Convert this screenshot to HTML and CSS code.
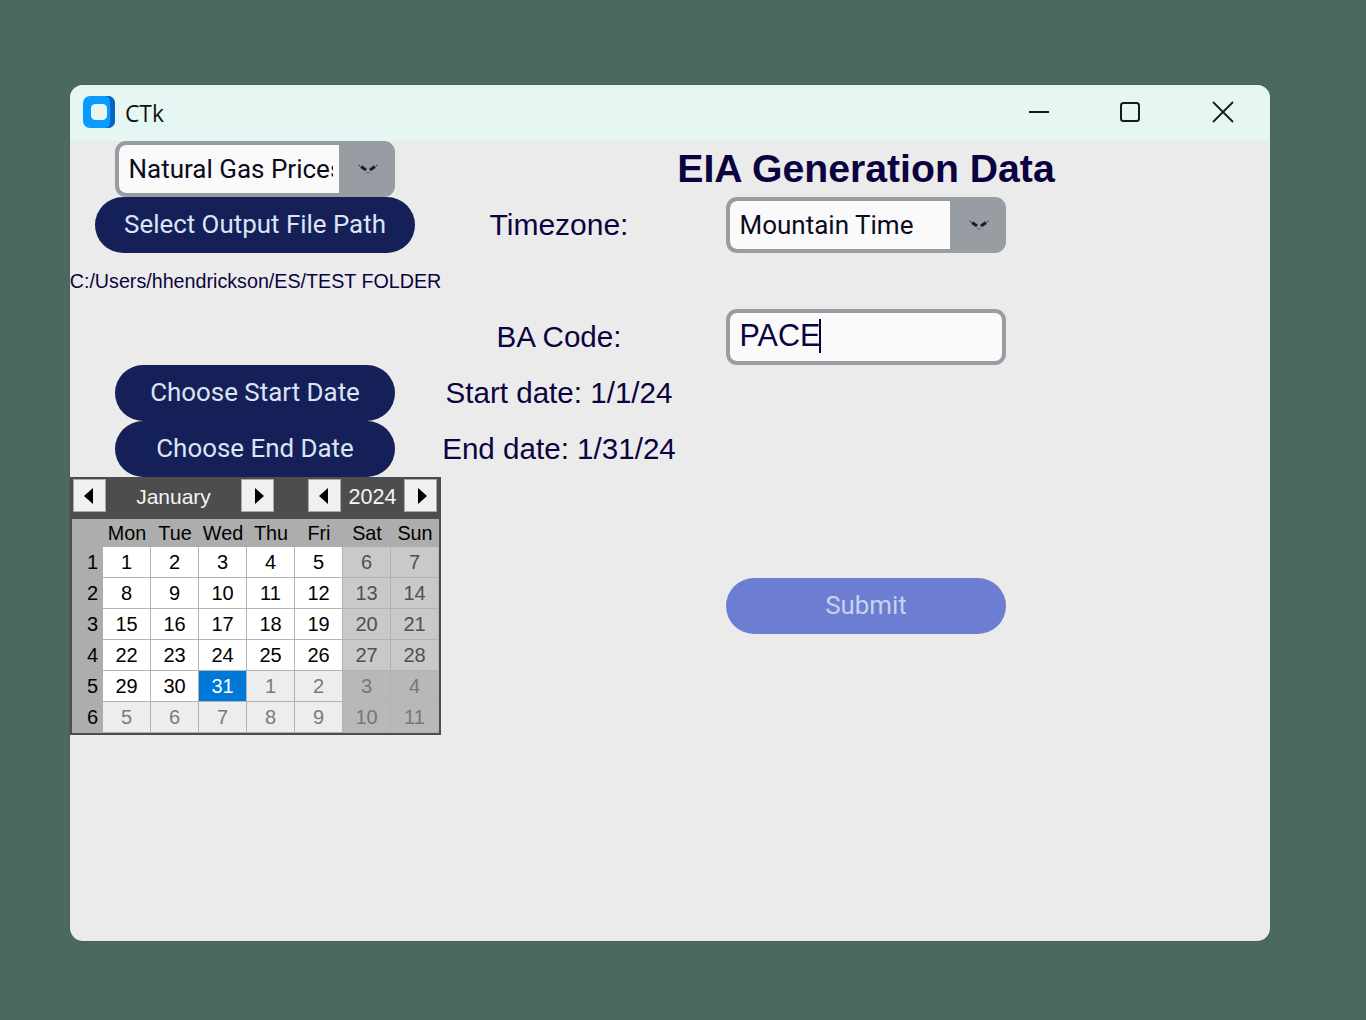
FILE: index.html
```html
<!DOCTYPE html>
<html lang="en">
<head>
<meta charset="utf-8">
<title>CTk</title>
<link rel="stylesheet" href="styles.css">
</head>
<body>
<div class="window">
  <header class="titlebar">
    <svg class="app-icon" width="32" height="32" viewBox="0 0 32 32"><rect width="32" height="32" rx="7" fill="#0a9bff"/><path d="M23 0h2a7 7 0 0 1 7 7v18a7 7 0 0 1-7 7h-2c3-1 4-3 4-6V6c0-3-1-5-4-6z" fill="#0667c0"/><rect x="8" y="8" width="16" height="16" rx="4.500" fill="#e6f7f3"/></svg>
    <span class="app-title">CTk</span>
    <div class="win-controls">
      <svg class="wc wc-min" width="22" height="22" viewBox="0 0 22 22"><path d="M1 11h20" stroke="#1a1a1a" stroke-width="2"/></svg>
      <svg class="wc wc-max" width="22" height="22" viewBox="0 0 22 22"><rect x="2" y="2" width="18" height="18" rx="2.500" fill="none" stroke="#1a1a1a" stroke-width="2"/></svg>
      <svg class="wc wc-close" width="22" height="22" viewBox="0 0 22 22"><path d="M1 1l20 20M21 1L1 21" stroke="#1a1a1a" stroke-width="1.800"/></svg>
    </div>
  </header>
  <main class="form">
    <div class="cell cell-left"><div class="combo"><span class="combo-text">Natural Gas Prices</span><span class="combo-arrow"><svg width="20" height="10" viewBox="0 0 20 10"><path d="M3 2.500L8 6M12 6l5-3.500" fill="none" stroke="#1c1c1c" stroke-width="3"/><path d="M.5 1L2 2M19.500 1L18 2" fill="none" stroke="#2a2a2a" stroke-width="1"/><path d="M8 8.500q2 1.500 4 0" fill="none" stroke="#666" stroke-width="1"/></svg></span></div></div>
    <div class="cell"></div>
    <div class="cell"><h1 class="heading">EIA Generation Data</h1></div>

    <div class="cell cell-left"><button class="pill pill-wide">Select Output File Path</button></div>
    <div class="cell"><span class="label label-tz">Timezone:</span></div>
    <div class="cell"><div class="combo"><span class="combo-text">Mountain Time</span><span class="combo-arrow"><svg width="20" height="10" viewBox="0 0 20 10"><path d="M3 2.500L8 6M12 6l5-3.500" fill="none" stroke="#1c1c1c" stroke-width="3"/><path d="M.5 1L2 2M19.500 1L18 2" fill="none" stroke="#2a2a2a" stroke-width="1"/><path d="M8 8.500q2 1.500 4 0" fill="none" stroke="#666" stroke-width="1"/></svg></span></div></div>

    <div class="cell"><span class="path">C:/Users/hhendrickson/ES/TEST FOLDER</span></div>
    <div class="cell"></div>
    <div class="cell"></div>

    <div class="cell"></div>
    <div class="cell"><span class="label label-ba">BA Code:</span></div>
    <div class="cell"><div class="entry"><span class="entry-text">PACE</span><span class="caret"></span></div></div>

    <div class="cell cell-left"><button class="pill">Choose Start Date</button></div>
    <div class="cell"><span class="label">Start date: 1/1/24</span></div>
    <div class="cell"></div>

    <div class="cell cell-left"><button class="pill">Choose End Date</button></div>
    <div class="cell"><span class="label">End date: 1/31/24</span></div>
    <div class="cell"></div>

    <div class="cell cell-cal">
      <div class="calendar">
        <div class="cal-head">
          <button class="nav nav-first"><svg width="12" height="16" viewBox="0 0 12 16"><path d="M9 0v16L0 8z"/></svg></button>
          <span class="month">January</span>
          <button class="nav"><svg width="12" height="16" viewBox="0 0 12 16"><path d="M3 0v16l9-8z"/></svg></button>
          <button class="nav nav-year"><svg width="12" height="16" viewBox="0 0 12 16"><path d="M9 0v16L0 8z"/></svg></button>
          <span class="year">2024</span>
          <button class="nav"><svg width="12" height="16" viewBox="0 0 12 16"><path d="M3 0v16l9-8z"/></svg></button>
        </div>
        <div class="cal-grid">
          <span class="dow"></span><span class="dow">Mon</span><span class="dow">Tue</span><span class="dow">Wed</span><span class="dow">Thu</span><span class="dow">Fri</span><span class="dow">Sat</span><span class="dow">Sun</span>
          <span class="wk">1</span><span class="d">1</span><span class="d">2</span><span class="d">3</span><span class="d">4</span><span class="d">5</span><span class="d we">6</span><span class="d we">7</span>
          <span class="wk">2</span><span class="d">8</span><span class="d">9</span><span class="d">10</span><span class="d">11</span><span class="d">12</span><span class="d we">13</span><span class="d we">14</span>
          <span class="wk">3</span><span class="d">15</span><span class="d">16</span><span class="d">17</span><span class="d">18</span><span class="d">19</span><span class="d we">20</span><span class="d we">21</span>
          <span class="wk">4</span><span class="d">22</span><span class="d">23</span><span class="d">24</span><span class="d">25</span><span class="d">26</span><span class="d we">27</span><span class="d we">28</span>
          <span class="wk">5</span><span class="d">29</span><span class="d">30</span><span class="d sel">31</span><span class="d om">1</span><span class="d om">2</span><span class="d omwe">3</span><span class="d omwe">4</span>
          <span class="wk">6</span><span class="d om">5</span><span class="d om">6</span><span class="d om">7</span><span class="d om">8</span><span class="d om">9</span><span class="d omwe">10</span><span class="d omwe">11</span>
        </div>
      </div>
    </div>
    <div class="cell cell-cal"></div>
    <div class="cell cell-cal"><button class="pill pill-submit">Submit</button></div>
  </main>
</div>
</body>
</html>
```
FILE: styles.css
```css
* { box-sizing: border-box; }
html, body { margin: 0; height: 1020px; overflow: hidden; }
body { background: #4b695f; padding: 85px 0 0 70px; font-family: "Liberation Sans", Arial, sans-serif; }
.window { width: 1200px; height: 856px; background: #ebebeb; border-radius: 13px; overflow: hidden; box-shadow: 0 0 0 1px rgba(0, 0, 0, 0.06); }
.titlebar { height: 56px; background: #e6f7f3; display: flex; align-items: center; padding: 0 0 0 13px; }
.app-icon { margin-top: -2px; }
.app-title { font: 400 22.800px "Open Sans", "Noto Sans", sans-serif; color: #111; margin-left: 10px; }
.win-controls { margin-left: auto; display: flex; align-items: center; padding-right: 36px; gap: 69px; }
.wc { display: block; margin-top: -2px; }
.wc-close { margin-left: 2px; }

.form { display: grid; grid-template-columns: 371px 236px 378px; grid-template-rows: repeat(6, 56px) 258px; }
.cell { display: flex; align-items: center; justify-content: center; min-width: 0; }
.cell-left { padding-right: 1px; }

.heading { margin: 0; font-size: 39.200px; font-weight: 700; color: #0b0340; white-space: nowrap; }
.label { font-size: 29.600px; color: #0b0340; white-space: nowrap; }
.label-tz { font-size: 30px; }
.label-ba { padding-bottom: 1px; }
.path { font-size: 19.700px; color: #0b0340; white-space: nowrap; }

.combo { width: 280px; height: 56px; border: 4px solid #979da2; border-radius: 11px; background: #979da2; display: flex; overflow: hidden; }
.combo-text { width: 220px; background: #fafafa; border-right: 6px solid #fafafa; padding-left: 9.500px; font: 400 26px Roboto, sans-serif; color: #0b0b20; line-height: 48px; white-space: nowrap; overflow: hidden; border-radius: 7px 0 0 7px; }
.combo-arrow { flex: 1; display: flex; align-items: center; justify-content: center; padding-left: 5px; }

.entry { width: 280px; height: 56px; border: 4px solid #979da2; border-radius: 11px; background: #fafafa; display: flex; align-items: center; padding: 0 0 3px 9.500px; }
.entry-text { font-size: 30.500px; color: #0b0340; }
.caret { width: 2px; height: 34px; margin-left: -1px; background: #0b0340; }

.pill { width: 280px; height: 56px; border: 0; border-radius: 28px; background: #162058; color: #dce4f5; font: 400 25.900px Roboto, sans-serif; padding: 0 0 2px; }
.pill-wide { width: 320px; }
.pill-submit { background: #6d7dd1; color: #c8d2ee; }

.calendar { width: 371px; height: 258px; background: #4d4d4d; padding: 1px 2px 2px; }
.cal-head { height: 41px; display: flex; align-items: center; padding: 0 1px 6px 1px; }
.nav { width: 33px; height: 33px; padding: 0; border: 1px solid #a9a9a9; background: #f0f0f0; display: flex; align-items: center; justify-content: center; }
.month { width: 135px; padding-top: 2px; text-align: center; color: #f4f4f4; font-size: 21px; }
.year { width: 63px; padding-top: 3px; text-align: center; color: #f4f4f4; font-size: 21.500px; }
.nav-year { margin-left: 34px; }
.cal-grid { background: #adadad; display: grid; grid-template-columns: 31px repeat(7, 48px); grid-template-rows: 28px repeat(6, 31px); height: 214px; width: 367px; }
.dow { color: #000; font-size: 19.800px; display: flex; align-items: center; justify-content: center; }
.wk { color: #000; font-size: 20px; display: flex; align-items: center; justify-content: flex-end; padding-right: 5px; }
.d { background: #fff; color: #000; font-size: 20px; display: flex; align-items: center; justify-content: center; border-right: 1px solid #b3b3b3; border-bottom: 1px solid #b3b3b3; }
.we { background: #c9c9c9; color: #505050; }
.om { background: #ededed; color: #7a7a7a; }
.omwe { background: #b8b8b8; color: #777; }
.sel { background: #0078d7; color: #fff; }
```
